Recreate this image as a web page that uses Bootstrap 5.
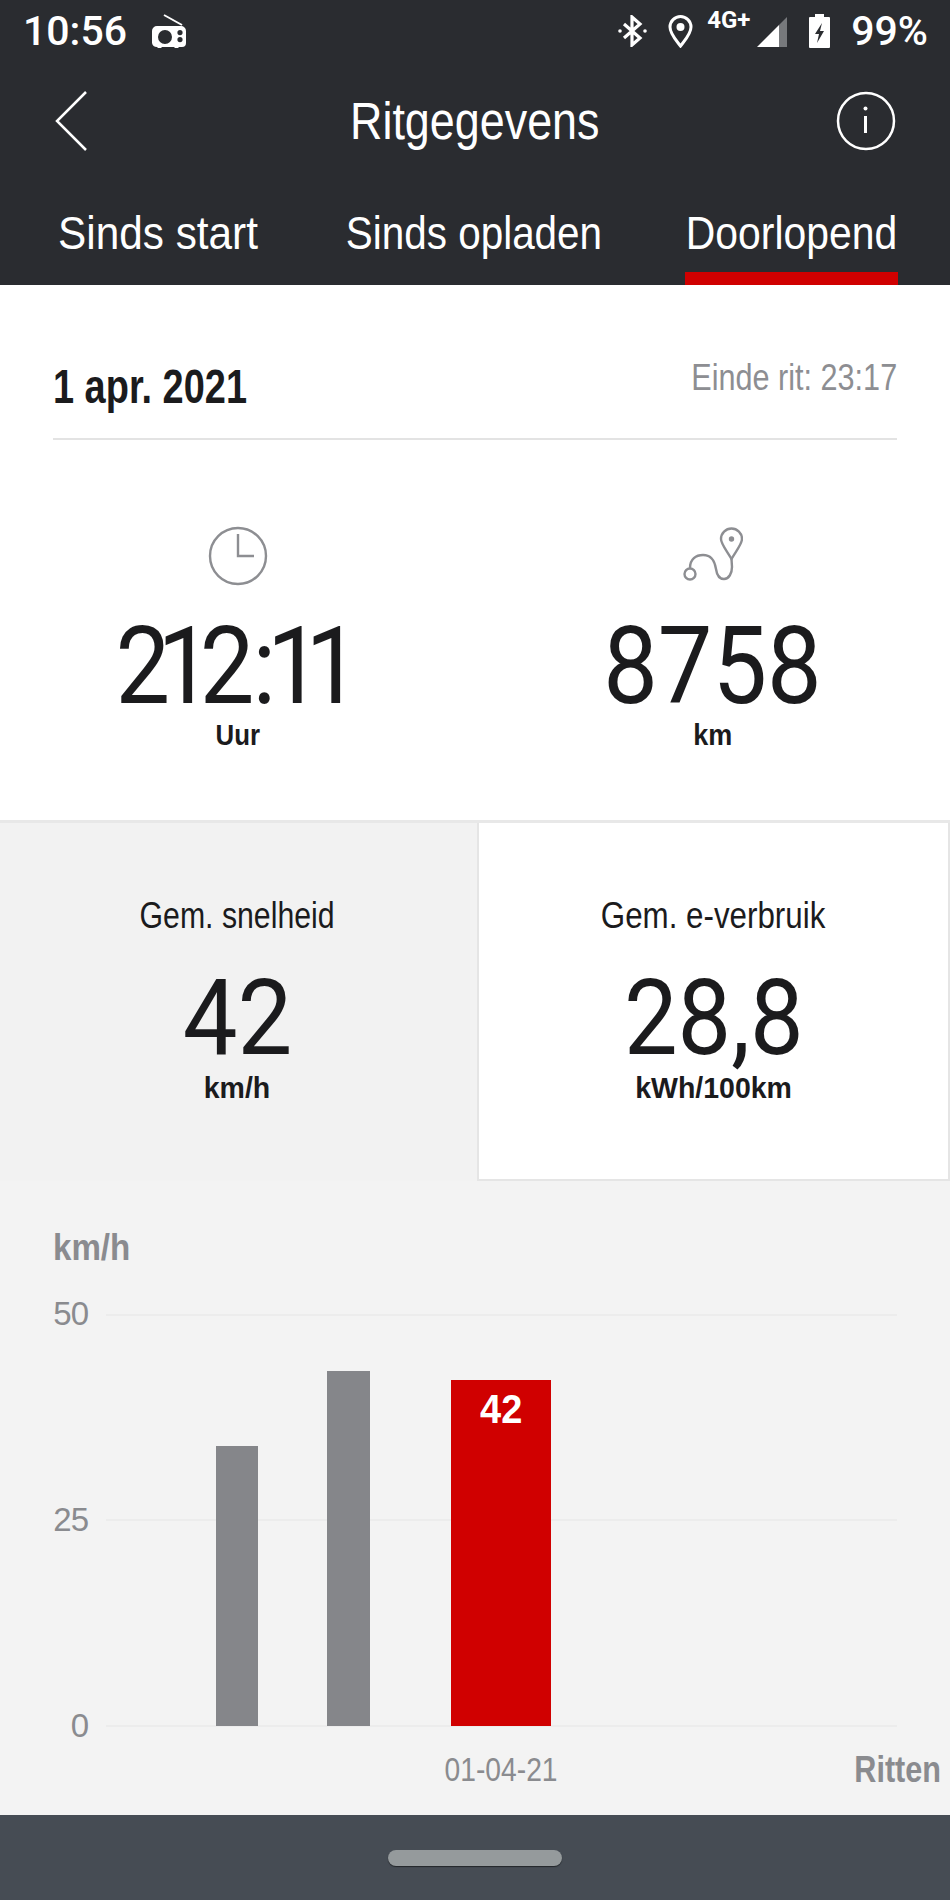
<!doctype html>
<html lang="nl">
<head>
<meta charset="utf-8">
<title>Ritgegevens</title>
<link rel="stylesheet" href="https://cdn.jsdelivr.net/npm/bootstrap@5.3.0/dist/css/bootstrap.min.css">
<style>
html,body{margin:0;background:#f3f3f3}
body{width:950px;height:1900px;overflow:hidden;font-family:"Liberation Sans",sans-serif;color:#1b1b1d}
.sq{display:inline-block;white-space:nowrap;transform:scaleX(var(--sx,.87))}
.sq-l{transform-origin:left center}
.sq-r{transform-origin:right center}
.sx-79{--sx:.79}.sx-83{--sx:.83}.sx-84{--sx:.84}.sx-85{--sx:.85}.sx-86{--sx:.86}.sx-87{--sx:.87}.sx-88{--sx:.88}.sx-90{--sx:.9}.sx-92{--sx:.92}.sx-95{--sx:.95}
.app-head{background:#2a2c30;color:#fff;height:285px}
.status-bar{height:62px;padding:0 22px 0 23px;font-family:Roboto,sans-serif;font-weight:500;font-size:41px;line-height:1}
.net-label{font-size:24px;font-weight:700;margin:-22px 0 0 14px;width:46px}
.title-bar{height:118px;padding:0 54px 0 54px}
.side-slot{width:60px}
.title-text{font-size:51px;line-height:1}
.tab-row{height:105px;padding:0 52px 0 59px}
.tab-item{font-size:47px;line-height:1;padding-bottom:16px;color:#fff;border-bottom:13px solid transparent;text-decoration:none}
.tab-a{width:198px}
.tab-b{width:256px;margin-left:89px}
.tab-c{width:213px;margin-left:83px;border-bottom-color:#d00000}
.trip-head{background:#fff;padding:0 53px}
.date-row{height:155px;border-bottom:2px solid #e3e3e3;padding-top:73px}
.trip-date{font-size:48px;font-weight:700;line-height:1.2}
.trip-end{font-size:36px;color:#8d8e92;line-height:1.2;margin-top:-2px}
.totals{background:#fff;height:383px;border-bottom:3px solid #e8e8e8}
.total-cell{padding-top:86px}
.icon-slot{height:60px}
.big-num{font-family:Roboto,sans-serif;font-size:108px;line-height:100px;margin-top:30px}
.kern-one{letter-spacing:-14px}
.kern-two{letter-spacing:-2px}
.kern-colon{letter-spacing:-10px}
.kern-pair{letter-spacing:-18px}
.unit-text{font-size:30px;font-weight:700;line-height:1;margin-top:4px}
.avg-row{height:358px;background:#f2f2f2}
.avg-cell{height:100%;padding-top:71px}
.avg-on{background:#fff;border:2px solid #e5e5e5;border-top:0;margin-left:2px;width:473px}
.avg-label{font-size:36px;line-height:43px}
.avg-cell .big-num{margin-top:33px;line-height:96px;font-size:106px}
.avg-cell .unit-text{margin-top:7px}
.chart-wrap{height:634px;background:#f3f3f3}
.axis-unit{font-size:36px;font-weight:700;color:#8a8b8f;padding:47px 0 0 53px;line-height:40px;height:133px}
.plot-row{height:412px}
.axis-col{width:88px;height:444px;margin-top:-16px;color:#8a8b8f;font-size:33px;line-height:32px;letter-spacing:-1px}
.plot-area{width:791px;margin-left:18px;height:412px;position:relative;padding-left:110px;gap:69px}
.grid-line{position:absolute;left:0;right:0;height:2px;background:#ececec}
.bar-gray{width:42px;background:#85868a;position:relative}
.bar-wide{width:43px}
.bar-red{width:100px;background:#d00000;color:#fff;font-weight:700;font-size:40px;line-height:1;padding-top:9px;position:relative;margin-left:12px}
.x-row{height:89px;padding-top:25px;color:#8a8b8f;font-size:34px;line-height:37px}
.x-date{margin-left:445px;width:113px}
.x-name{margin-left:auto;margin-right:9px;font-weight:700;font-size:36px}
.nav-strip{background:#464c54;height:85px}
.nav-pill{width:174px;height:16px;border-radius:8px;background:#959a9c;box-shadow:0 1px 1px #22262a}
</style>
</head>
<body>
<header class="app-head">
  <div class="status-bar d-flex align-items-center">
    <span>10:56</span>
    <svg class="ms-4" width="36" height="34" viewBox="0 0 36 34" fill="#fff"><path d="M13 1l18 10" stroke="#fff" stroke-width="2" fill="none"/><path fill-rule="evenodd" d="M6 12h24a5 5 0 0 1 5 5v12a4 4 0 0 1-4 4h-3l-1 1h-3l-1-1H11l-1 1H7l-1-1a5 5 0 0 1-5-4V17a5 5 0 0 1 5-5zm8 4a7 7 0 1 0 0 14 7 7 0 0 0 0-14zm15 0a2.600 2.600 0 1 0 0 5.200 2.600 2.600 0 0 0 0-5.200zm0 7a2.600 2.600 0 1 0 0 5.200 2.600 2.600 0 0 0 0-5.200z"/></svg>
    <svg class="ms-auto" width="29" height="32" viewBox="0 0 29 32" fill="none" stroke="#fff" stroke-width="3.200"><path d="M6 9l16 14-8 7V2l8 7L6 23"/><circle cx="2" cy="16" r="1.800" fill="#fff" stroke="none"/><circle cx="27" cy="16" r="1.800" fill="#fff" stroke="none"/></svg>
    <svg style="margin-left:21px" width="25" height="33" viewBox="0 0 25 33" fill="none"><path d="M12.500 31C8 25 2 19 2 12a10.500 10.500 0 0 1 21 0c0 7-6 13-10.500 19z" stroke="#fff" stroke-width="3"/><circle cx="12.500" cy="12" r="4" fill="#fff"/></svg>
    <span class="net-label">4G+</span>
    <svg width="30" height="31" viewBox="0 0 30 31" style="margin-left:4px"><path d="M0 31L22 9v22z" fill="#fff"/><path d="M22 9l8-8v30h-8z" fill="#77797c"/></svg>
    <svg style="margin-left:22px" width="21" height="34" viewBox="0 0 21 34"><path fill="#fff" fill-rule="evenodd" d="M6 0h9v3h5a1 1 0 0 1 1 1v29a1 1 0 0 1-1 1H1a1 1 0 0 1-1-1V4a1 1 0 0 1 1-1h5zm7 9l-7 11h4l-2 9 7-12h-4z"/></svg>
    <span style="margin-left:21px">99%</span>
  </div>
  <div class="title-bar d-flex align-items-center justify-content-between">
    <div class="side-slot d-flex"><svg width="34" height="60" viewBox="0 0 34 60" fill="none" stroke="#fff" stroke-width="2.500"><path d="M32 1L3 30l29 29"/></svg></div>
    <span class="title-text sq sx-88">Ritgegevens</span>
    <div class="side-slot d-flex"><svg width="60" height="60" viewBox="0 0 60 60" fill="none" stroke="#fff" stroke-width="2.500"><circle cx="30" cy="30" r="28"/><path d="M29.500 25v17" stroke-width="3"/><circle cx="29.500" cy="17.500" r="2" fill="#fff" stroke="none"/></svg></div>
  </div>
  <nav class="tab-row d-flex align-items-end">
    <a class="tab-item tab-a d-flex justify-content-center" href="#"><span class="sq sx-90">Sinds start</span></a>
    <a class="tab-item tab-b d-flex justify-content-center" href="#"><span class="sq sx-86">Sinds opladen</span></a>
    <a class="tab-item tab-c d-flex justify-content-center" href="#"><span class="sq sx-87">Doorlopend</span></a>
  </nav>
</header>
<main>
  <section class="trip-head">
    <div class="date-row d-flex justify-content-between align-items-start">
      <span class="trip-date sq sq-l sx-79">1 apr. 2021</span>
      <span class="trip-end sq sq-r sx-85 d-block">Einde rit: 23:17</span>
    </div>
  </section>
  <section class="totals row g-0">
    <div class="col-6 text-center total-cell">
      <div class="icon-slot"><svg width="60" height="60" viewBox="0 0 60 60" fill="none" stroke="#8d8e92" stroke-width="2.400"><circle cx="30" cy="30" r="28"/><path d="M30 8v22h16"/></svg></div>
      <div class="big-num"><span class="sq sx-90"><span class="kern-one">21</span><span class="kern-two">2</span><span class="kern-colon">:</span><span class="kern-pair">1</span>1</span></div>
      <div class="unit-text"><span class="sq sx-86">Uur</span></div>
    </div>
    <div class="col-6 text-center total-cell">
      <div class="icon-slot"><svg width="60" height="60" viewBox="0 -3 60 60" fill="none" stroke="#8d8e92" stroke-width="2.400"><circle cx="7" cy="45" r="5.500"/><path d="M7 39C7 30 13 26 20 26c10 0 12 8 13 14 1 7 4 10 8 10 5 0 8-6 8-12l-.5-8"/><path d="M48.500 30C44 22 38 15 38 10a10.500 10.500 0 0 1 21 0c0 5-6 12-10.500 20z"/><circle cx="48.500" cy="10" r="1.500" fill="#8d8e92"/></svg></div>
      <div class="big-num"><span class="sq sx-90">8758</span></div>
      <div class="unit-text"><span class="sq sx-90">km</span></div>
    </div>
  </section>
  <section class="avg-row d-flex">
    <div class="col-6 text-center avg-cell">
      <div class="avg-label"><span class="sq sx-84">Gem. snelheid</span></div>
      <div class="big-num"><span class="sq sx-92">42</span></div>
      <div class="unit-text"><span class="sq sx-95">km/h</span></div>
    </div>
    <div class="text-center avg-cell avg-on">
      <div class="avg-label"><span class="sq sx-87">Gem. e-verbruik</span></div>
      <div class="big-num"><span class="sq sx-90">28,8</span></div>
      <div class="unit-text"><span class="sq sx-95">kWh/100km</span></div>
    </div>
  </section>
  <section class="chart-wrap">
    <div class="axis-unit"><span class="sq sq-l sx-92">km/h</span></div>
    <div class="plot-row d-flex">
      <div class="axis-col d-flex flex-column justify-content-between text-end"><span>50</span><span>25</span><span>0</span></div>
      <div class="plot-area d-flex align-items-end">
        <i class="grid-line" style="top:0"></i><i class="grid-line" style="top:205px"></i><i class="grid-line" style="top:411px"></i>
        <div class="bar-gray" style="height:280px"></div>
        <div class="bar-gray bar-wide" style="height:355px"></div>
        <div class="bar-red text-center" style="height:346px"><span class="sq sx-95">42</span></div>
      </div>
    </div>
    <div class="x-row d-flex">
      <span class="x-date d-flex justify-content-center"><span class="sq sx-83">01-04-21</span></span>
      <span class="x-name"><span class="sq sq-r sx-85">Ritten</span></span>
    </div>
  </section>
</main>
<footer class="nav-strip d-flex justify-content-center align-items-center"><div class="nav-pill"></div></footer>
<script src="https://cdn.jsdelivr.net/npm/bootstrap@5.3.0/dist/js/bootstrap.bundle.min.js"></script>
</body>
</html>
